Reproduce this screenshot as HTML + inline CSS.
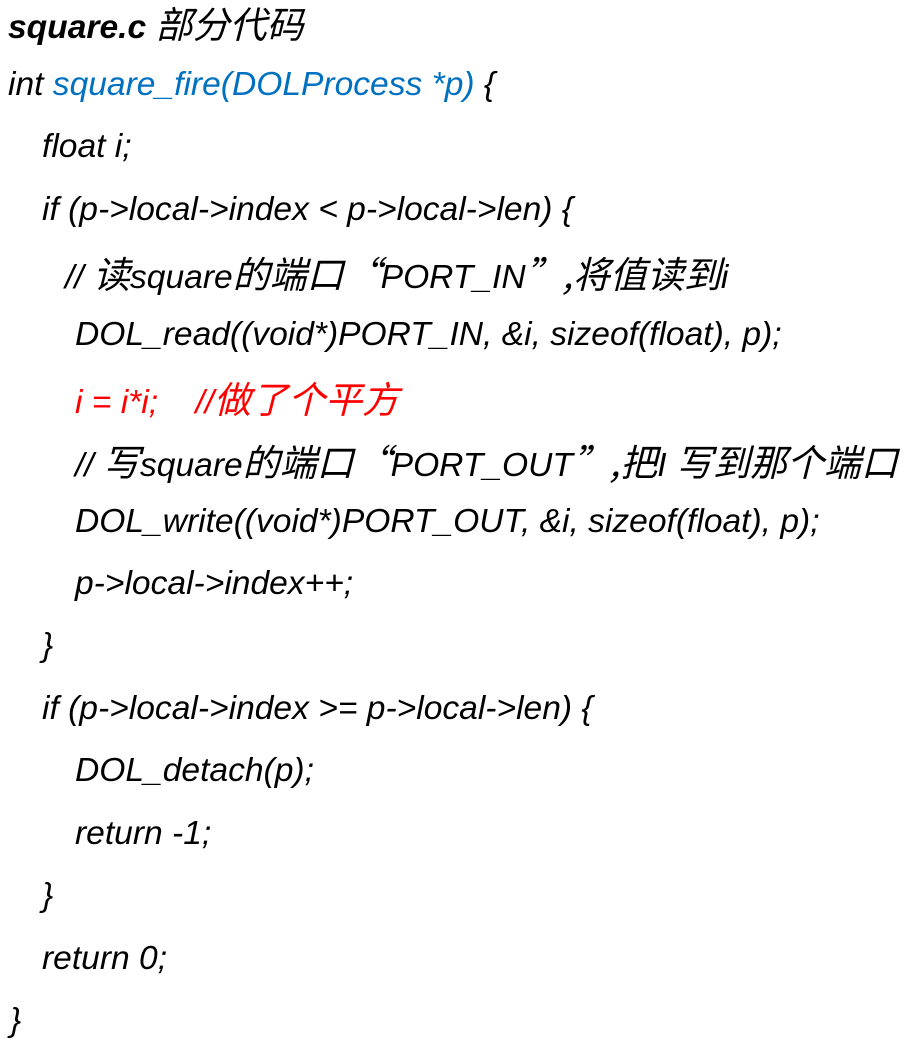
<!DOCTYPE html>
<html><head><meta charset="utf-8"><style>
html,body{margin:0;padding:0;background:#fff;width:912px;height:1049px;overflow:hidden}
.l{position:absolute;white-space:pre;font-family:"Liberation Sans","Noto Sans CJK SC",sans-serif;font-style:italic;font-size:33.6px;line-height:40px;color:#000}
.c{font-family:"Noto Sans CJK SC",sans-serif;font-size:37px;font-style:italic}
.b{color:#0070c0}.r{color:#ff0000}
</style></head><body>
<div class="l" style="left:8px;top:2px"><b>square.c</b> <span class="c">部分代码</span></div>
<div class="l" style="left:8px;top:65px">int <span class="b">square_fire(DOLProcess *p)</span> {</div>
<div class="l" style="left:42px;top:127px">float i;</div>
<div class="l" style="left:42px;top:190px">if (p-&gt;local-&gt;index &lt; p-&gt;local-&gt;len) {</div>
<div class="l" style="left:65px;top:252px">// <span class="c">读</span>square<span class="c">的端口“</span>PORT_IN<span class="c">”,将值读到</span>i</div>
<div class="l" style="left:75px;top:315px">DOL_read((void*)PORT_IN, &amp;i, sizeof(float), p);</div>
<div class="l r" style="left:75px;top:377px">i = i*i;    //<span class="c">做了个平方</span></div>
<div class="l" style="left:75px;top:440px">// <span class="c">写</span>square<span class="c">的端口“</span>PORT_OUT<span class="c">”,把</span>I <span class="c">写到那个端口</span></div>
<div class="l" style="left:75px;top:502px">DOL_write((void*)PORT_OUT, &amp;i, sizeof(float), p);</div>
<div class="l" style="left:75px;top:564px">p-&gt;local-&gt;index++;</div>
<div class="l" style="left:42px;top:626px">}</div>
<div class="l" style="left:42px;top:689px">if (p-&gt;local-&gt;index &gt;= p-&gt;local-&gt;len) {</div>
<div class="l" style="left:75px;top:751px">DOL_detach(p);</div>
<div class="l" style="left:75px;top:814px">return -1;</div>
<div class="l" style="left:42px;top:876px">}</div>
<div class="l" style="left:42px;top:939px">return 0;</div>
<div class="l" style="left:10px;top:1001px">}</div>
</body></html>
